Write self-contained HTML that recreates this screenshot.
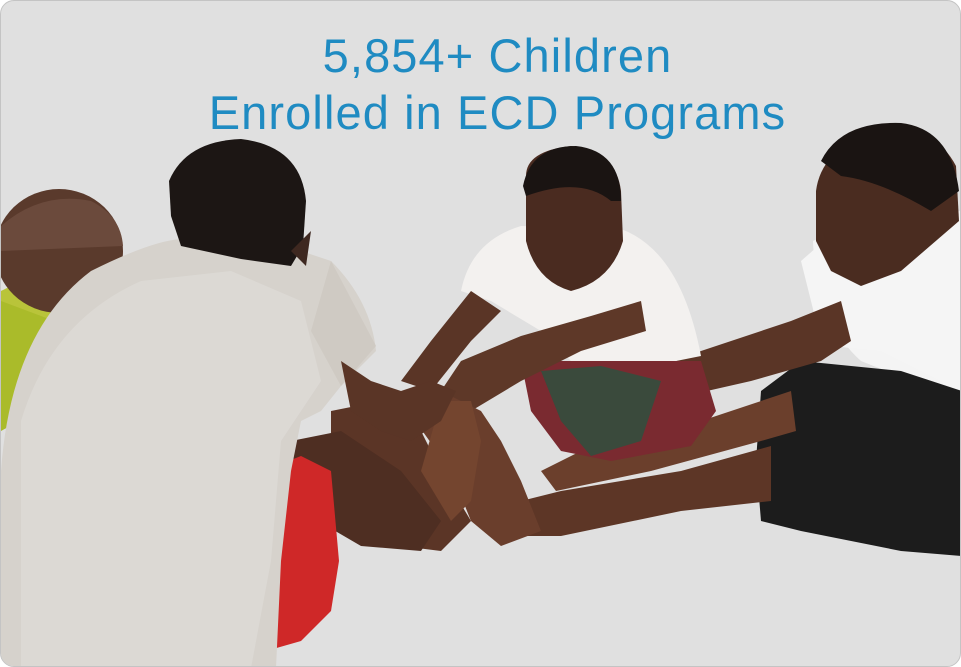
<!DOCTYPE html>
<html><head><meta charset="utf-8"><style>
html,body{margin:0;padding:0;background:#fff;}
.card{position:absolute;left:0;top:0;width:959px;height:665px;border:1px solid #c4c4c4;border-radius:14px;background:#e0e0e0;overflow:hidden;}
svg{position:absolute;left:0;top:0;}
.t{position:absolute;left:16px;width:961px;text-align:center;color:#1f8bc2;font-family:"Liberation Sans",sans-serif;font-size:47px;line-height:57px;top:26px;letter-spacing:1.1px;}
</style></head><body>
<div class="card">
<svg width="961" height="667" viewBox="0 0 961 667">
<path d="M0 330 L50 320 L55 300 L20 280 L0 290Z" fill="#b9c43a"/>
<path d="M0 300 L48 318 L40 360 L18 420 L0 430Z" fill="#aabb2a"/>
<ellipse cx="58" cy="250" rx="64" ry="62" fill="#5a3a2c"/>
<path d="M0 225 Q40 190 90 200 Q120 215 122 245 L0 250Z" fill="#6b4a3c"/>
<path d="M812 240 Q815 320 860 360 L961 400 L961 220 L900 200Z" fill="#f4f4f4"/>
<path d="M800 260 L840 225 L900 215 L961 210 L961 400 L940 380 L880 350 L830 345 L815 320Z" fill="#f5f5f5"/>
<path d="M760 390 L800 360 L900 370 L961 390 L961 555 L900 550 L800 530 L760 520 L755 460Z" fill="#1c1c1c"/>
<path d="M815 190 Q820 150 870 130 Q930 118 955 165 L958 220 L900 270 L860 285 L830 270 L815 240Z" fill="#4a2c20"/>
<path d="M820 160 Q840 120 900 122 Q950 128 958 190 L930 210 Q880 180 840 175Z" fill="#1a1412"/>
<path d="M840 300 L790 320 L700 350 L600 390 L545 420 L560 440 L640 405 L750 380 L820 360 L850 340Z" fill="#5a3526"/>
<path d="M790 390 L700 420 L600 440 L540 470 L555 490 L650 470 L760 440 L795 430Z" fill="#6b3f2c"/>
<path d="M770 445 L680 470 L560 490 L480 510 L490 535 L560 535 L680 510 L770 500Z" fill="#5d3626"/>
<path d="M460 290 Q470 240 520 225 L620 228 Q680 250 700 355 L650 365 L570 360 L540 330 L490 300Z" fill="#f3f1ef"/>
<path d="M520 360 L700 360 L715 410 L690 445 L610 460 L560 450 L530 410Z" fill="#7a2a30"/>
<path d="M540 370 L600 365 L660 380 L640 440 L590 455 L560 420Z" fill="#3a4a3c"/>
<path d="M525 175 Q525 150 570 145 Q615 150 620 190 L622 240 Q610 280 570 290 Q535 280 525 240Z" fill="#4a2b20"/>
<path d="M522 185 Q530 145 575 145 Q620 150 620 200 L610 200 Q580 175 525 195Z" fill="#1a1412"/>
<path d="M470 290 L430 340 L400 380 L430 390 L470 340 L500 310Z" fill="#5a3526"/>
<path d="M640 300 L590 315 L520 335 L460 360 L440 390 L470 410 L520 380 L580 350 L645 330Z" fill="#5e3828"/>
<path d="M330 410 L380 400 L420 430 L440 470 L470 520 L440 550 L400 545 L360 500 L330 470Z" fill="#5b3526"/>
<path d="M400 400 L440 390 L480 410 L500 440 L520 480 L540 530 L500 545 L470 520 L450 470Z" fill="#6a3e2c"/>
<path d="M440 400 L470 400 L480 440 L470 500 L450 520 L420 470Z" fill="#74452f"/>
<path d="M290 440 L340 430 L400 470 L440 520 L420 550 L360 545 L300 510Z" fill="#4e2e22"/>
<path d="M262 470 L300 455 L330 470 L338 560 L330 610 L300 640 L265 650Z" fill="#cf2828"/>
<path d="M0 470 Q10 330 90 270 Q150 240 180 238 L300 250 L330 260 Q370 300 375 350 L340 385 L320 410 L300 420 L290 470 L280 560 L275 667 L0 667Z" fill="#d6d2cc"/>
<path d="M20 420 Q50 320 140 280 L230 270 L300 300 L320 380 L280 440 L270 560 L250 667 L20 667Z" fill="#dcd9d4"/>
<path d="M330 260 L375 345 L340 385 L310 330Z" fill="#cfcac3"/>
<path d="M168 180 Q185 140 240 138 Q300 145 305 200 L302 245 L290 265 L240 258 L180 245 L170 215Z" fill="#1c1614"/>
<path d="M290 250 L310 230 L305 265Z" fill="#3e2820"/>
<path d="M340 360 L370 380 L400 390 L430 380 L455 390 L440 420 L410 440 L380 430 L350 410Z" fill="#5a3526"/>
</svg>
<div class="t">5,854+ Children<br>Enrolled in ECD Programs</div>
</div>
</body></html>
